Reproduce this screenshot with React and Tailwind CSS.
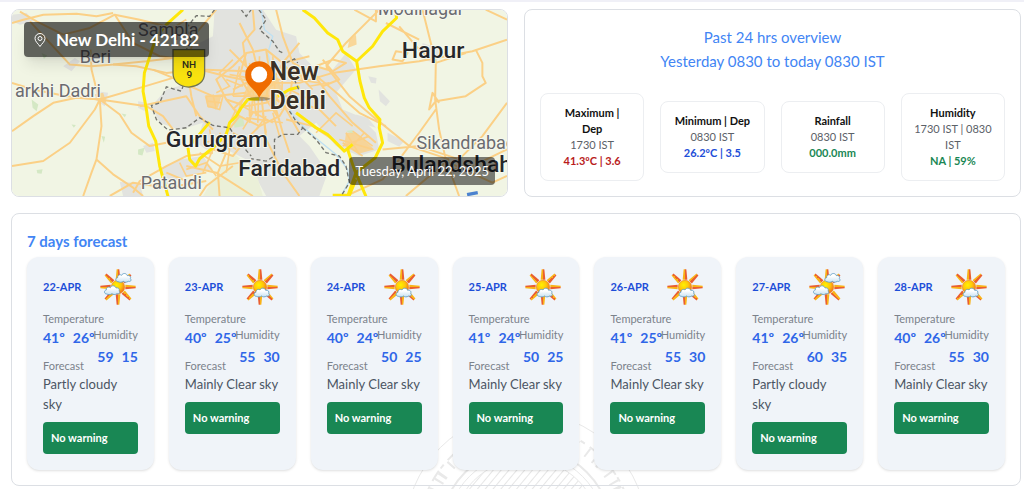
const overview = [
  { title: "Maximum | Dep", time: "1730 IST", value: "41.3ºC | 3.6", color: "text-[#b91c1c]" },
  { title: "Minimum | Dep", time: "0830 IST", value: "26.2ºC | 3.5", color: "text-[#1d4ed8]" },
  { title: "Rainfall", time: "0830 IST", value: "000.0mm", color: "text-[#198754]" },
  { title: "Humidity", time: "1730 IST | 0830 IST", value: "NA | 59%", color: "text-[#198754]" },
];

const forecast = [
  { date: "22-APR", max: 41, min: 26, rhMax: 59, rhMin: 15, sky: "Partly cloudy sky" },
  { date: "23-APR", max: 40, min: 25, rhMax: 55, rhMin: 30, sky: "Mainly Clear sky" },
  { date: "24-APR", max: 40, min: 24, rhMax: 50, rhMin: 25, sky: "Mainly Clear sky" },
  { date: "25-APR", max: 41, min: 24, rhMax: 50, rhMin: 25, sky: "Mainly Clear sky" },
  { date: "26-APR", max: 41, min: 25, rhMax: 55, rhMin: 30, sky: "Mainly Clear sky" },
  { date: "27-APR", max: 41, min: 26, rhMax: 60, rhMin: 35, sky: "Partly cloudy sky" },
  { date: "28-APR", max: 40, min: 26, rhMax: 55, rhMin: 30, sky: "Mainly Clear sky" },
];

const Cloud = ({ x, y }) => (
  <path
    transform={`translate(${x} ${y})`}
    d="M-17 12C-25 12-26 1-18 0C-19-8-10-11-6-7C-3-15 9-14 11-6C18-8 23-2 20 3C25 8 20 13 14 11C8 15 2 14-1 11C-6 15-12 14-17 12Z"
    fill="url(#cloud)"
    stroke="#5d9cc4"
    strokeWidth="2.5"
  />
);

function SkyIcon({ partly }) {
  return (
    <svg viewBox="-8 -6 120 120" className="size-10 shrink-0" aria-hidden="true">
      <defs>
        <radialGradient id="sun" cx="0.4" cy="0.35" r="0.7">
          <stop offset="0" stopColor="#fff200" />
          <stop offset="0.5" stopColor="#ffc60a" />
          <stop offset="1" stopColor="#f0641e" />
        </radialGradient>
        <linearGradient id="ray" x1="0" x2="1">
          <stop offset="0" stopColor="#f6b31b" />
          <stop offset="0.5" stopColor="#fbb216" />
          <stop offset="0.5" stopColor="#ea5f30" />
          <stop offset="1" stopColor="#ea5f30" />
        </linearGradient>
        <linearGradient id="cloud" x1="0" x2="0" y1="0" y2="1">
          <stop offset="0.3" stopColor="#ffffff" />
          <stop offset="1" stopColor="#c8e2f2" />
        </linearGradient>
      </defs>
      {[0, 45, 90, 135, 180, 225, 270, 315].map((a) => (
        <path key={a} d="M45 32L48 1H56L59 32Z" fill="url(#ray)" transform={`rotate(${a} 52 54)`} />
      ))}
      <circle cx="52" cy="54" r="20" fill="url(#sun)" stroke="#f08a1d" strokeWidth="2" />
      {partly ? (
        <>
          <Cloud x={69} y={26} />
          <Cloud x={35} y={63} />
        </>
      ) : (
        <Cloud x={58} y={70} />
      )}
    </svg>
  );
}

function MapView() {
  return (
    <svg
      viewBox="36 30 1488 561"
      preserveAspectRatio="xMidYMid slice"
      className="absolute inset-0 size-full"
      role="img"
      aria-label="Map of New Delhi"
    >
      <rect x="-400" y="-400" width="2400" height="1400" fill="#f1f5e4" />

      {/* urban areas */}
      <g fill="#e2e3df">
        <path d="M645 30L640 110L560 150L590 190L610 240L500 270L455 320L480 370L540 392L610 370L590 430L620 450L680 450L740 480L800 590H960L985 520L930 440L900 410L950 370L1010 440L1080 470L1140 450L1130 400L1080 350L1030 330L1010 280L1070 210L1040 160L1000 210L940 200L900 160L890 110L830 90L790 30Z" />
        <path d="M480 510L540 480L610 470L640 510L560 530L490 560Z" />
        <path d="M36 45L80 40L100 65L60 75L36 65ZM190 200L225 175L240 185L215 215ZM290 275L325 280L315 320L285 300ZM1107 230L1132 235L1130 252L1115 250ZM1138 270L1172 305L1160 320L1142 305ZM1165 400L1215 425L1200 442L1165 425ZM1270 130L1330 150L1310 190L1270 180ZM360 548L420 550L430 590H370ZM1070 345L1105 355L1130 385L1080 370Z" />
        <path d="M430 440L460 430L465 455L440 460ZM240 148L262 155L250 175ZM415 305L440 310L435 335L415 325Z" />
      </g>
      <g fill="#d4e8c4">
        <path d="M95 300L115 315L110 335L98 325ZM415 450L435 445L428 468L415 465ZM365 342L380 345L375 353ZM305 410L316 412L312 430ZM110 512L128 510L125 523L112 522ZM215 375L228 377L222 385ZM125 160L142 168L132 178ZM700 360L730 350L735 380L705 385ZM1040 395L1060 392L1062 405Z" />
      </g>
      <path d="M700 460L770 520L790 590H610L640 540Z" fill="#ebf0d8" />

      {/* river */}
      <path
        d="M785 30L795 90L820 110L805 160L815 200L830 240L850 290L880 345L920 390L960 425L1010 465L1045 510L1050 545L1025 590"
        fill="none"
        stroke="#bfe0f2"
        strokeWidth="4"
      />

      {/* minor roads */}
      <g fill="none" stroke="#fbd086" strokeWidth="6" strokeLinejoin="round">
        <path d="M36 70L70 60L130 45L230 42L290 50L340 40M60 36L110 65L190 105L270 85L345 45L420 60L520 85L560 60M90 65L150 130L210 195L275 200L340 195L440 185L520 175M272 150L275 210L290 270L300 300M36 250L100 270L200 290L300 300L420 265L520 235L600 210L740 215" />
        <path d="M36 395L100 350L160 310L230 295L300 300L285 330L210 430L130 485L36 500M300 300L305 380L290 480L275 520L250 590M290 480L340 525L400 565L430 590M300 300L360 345L395 400L450 440L500 430M300 300L440 320L490 350L520 390M340 195L410 200L500 220L600 210M345 45L400 130L480 170L560 180" />
        <path d="M400 580L420 545L500 500L560 470L640 460M330 590L400 550L500 565L620 545M460 210L520 235L570 260L640 290L740 280M420 320L560 290L600 350L640 390M590 350L575 290L560 190L590 100L650 30M660 590L655 520L680 460M700 500L620 560L600 590M500 520L560 545M560 500L650 520L760 590" />
        <path d="M650 240L700 200L740 160L800 150L850 190L880 230L870 300L840 350L780 380L720 350L680 300ZM690 150L740 200L800 260L860 330L900 400M720 70L760 150L779 230L790 330L800 420L850 520L900 590M600 210L680 230L779 250L900 250L1000 220M830 30L850 110L880 190L940 220L990 290L1060 370L1130 430" />
        <path d="M700 270L740 250L779 280L830 250M680 300L740 320L800 310L860 280M740 160L720 230L760 300L750 370M800 150L810 220L800 300L840 360M850 190L820 240L760 270L700 330M760 30L765 90L730 130L740 200M900 130L850 190L930 170M720 350L680 400L640 450L700 470L740 420L780 380M860 360L940 380L1000 420M870 300L960 330L1010 380M750 340L830 330L850 400L870 460" />
        <path d="M950 200L1000 215L1040 190L1000 180ZM970 180L1020 240L970 260M1000 220L1140 200L1260 185L1420 155L1524 120M980 200L1040 130L1120 50L1140 30M1065 30L1130 65L1130 30M980 200L1050 290L1120 350L1230 440L1350 480M940 220L1000 270L1080 340L1160 380" />
        <path d="M1270 30L1290 110L1310 190L1308 300L1320 390L1340 480L1380 590M1200 80L1260 150L1310 190L1400 160M1430 150L1450 190L1450 230L1460 250L1400 290L1310 305L1290 330L1300 280L1320 310M1310 330L1260 400L1200 480L1150 540L1040 590M1524 310L1450 410L1380 480L1260 440L1150 450M1340 485L1480 550L1524 530M1460 30L1524 60M1160 70L1260 120M1180 180L1190 155L1225 160L1210 185ZM1220 590L1350 480M1524 450L1420 500L1300 520" />
      </g>
      <g fill="none" stroke="#fbd086" strokeWidth="5">
        <path d="M610 430L660 420L710 450M600 460L660 500L720 490M630 390L640 450L610 520M660 400L690 450L680 520M620 290L670 290L660 330L625 320ZM640 285L650 330M625 305L665 310M700 400L750 430M560 510L620 490L650 530M540 490L560 530L620 520" />
        <path d="M730 215L830 225M735 235L850 240M700 290L870 290M720 200L700 290M750 190L770 350M780 170L775 370M820 170L830 340M850 210L845 330M760 340L730 390M790 340L800 400M820 340L840 410M710 310L820 370M740 355L850 370M880 210L940 270M870 270L930 300" />
        <path d="M700 180L660 220L690 260L650 280M710 330L690 370M730 300L710 350M750 310L750 350M800 350L770 390M830 300L870 330M680 240L730 260M690 225L750 235M890 240L960 250M900 220L930 260L990 250" />
        <path d="M1020 420L1120 450M1030 440L1110 410M1040 400L1080 465M1060 395L1120 440M1045 455L1095 400M1030 430L1090 470M950 400L1010 340L1060 380" />
      </g>
      <g fill="#fbd086" opacity="0.8">
        <path d="M750 245L830 225L850 270L810 300L730 290ZM1040 400L1070 400L1125 450L1080 462L1035 440ZM615 290H665L655 325H625ZM285 285L310 280L320 310L295 305ZM1050 120L1070 105L1072 135L1045 145Z" />
      </g>

      {/* expressways */}
      <g fill="none" stroke="#ffe70a" strokeWidth="9" strokeLinejoin="round">
        <path d="M550 30L500 75L470 110L452 165L434 220L430 275L440 330L447 380L468 425L480 500L505 591" />
        <path d="M910 30L945 55L985 100L1015 120L1030 155L1072 185L1082 245L1095 295L1110 325L1142 360L1140 385L1150 430L1128 475L1070 520L1045 591" />
        <path d="M1072 185L1120 140L1150 95L1192 55L1190 40" />
        <path d="M779 298L745 300L725 325L710 350L690 370L680 405L640 445L600 478L588 500L570 480L565 445L595 410L630 368" />
        <path d="M835 290L870 270L900 262M890 340L950 385L985 405L1035 455L1060 435M1045 450L1065 510L1100 591M1070 540L1050 588H1000" />
      </g>

      {/* state borders */}
      <g fill="none" stroke="#73746e" strokeWidth="4" strokeDasharray="12 8">
        <path d="M645 30L630 50L590 48L560 85L575 125L555 160L590 190L560 230L545 275L500 262L480 310L455 318L470 360L505 392L560 385L600 355L640 378L690 385L720 430L755 470" />
        <path d="M725 30L740 50L755 30M778 30L800 60L780 90L820 125L840 155L850 160M860 190L885 178L895 190M885 240L900 275M870 335L890 365L910 385L895 405L850 405L825 420L825 470L800 485L755 478M910 385L950 420L980 460L1020 470L1040 500L1050 550L1025 591" />
      </g>
      <path d="M1404 586L1436 580" stroke="#4b82cf" strokeWidth="10" />

      {/* highway shield */}
      <path d="M520 150H615V220C615 250 590 261 568 263C545 261 520 250 520 220Z" fill="#f9e20f" stroke="#6f7353" strokeWidth="4" />
      <g fill="#2e2c1e" fontFamily="Roboto, sans-serif" fontWeight="500" fontSize="30" textAnchor="middle">
        <text x="568" y="204">NH</text>
        <text x="569" y="235">9</text>
      </g>

      {/* place names */}
      <g
        fontFamily="Roboto, sans-serif"
        fontSize="54"
        fill="#6b6b70"
        stroke="#f6f8ee"
        strokeWidth="6"
        paintOrder="stroke"
        strokeLinejoin="round"
      >
        <text x="415" y="110">Sampla</text>
        <text x="240" y="189">Beri</text>
        <text x="303" y="293" textAnchor="end">arkhi Dadri</text>
        <text x="423" y="569">Pataudi</text>
        <text x="1136" y="46">Modinagar</text>
        <text x="1252" y="450">Sikandrabad</text>
        <g fontSize="69" fontWeight="500" fill="#25262a">
          <text x="498" y="443">Gurugram</text>
          <text x="716" y="530">Faridabad</text>
          <text x="1208" y="174">Hapur</text>
          <text x="1176" y="519">Bulandshahr</text>
        </g>
        <g fontSize="75" fontWeight="600" fill="#3a3026">
          <text x="810" y="242">New</text>
          <text x="810" y="329">Delhi</text>
        </g>
      </g>

      <ellipse cx="779" cy="298" rx="34" ry="6" fill="#000" opacity="0.3" />
      <path d="M779 295C767 266 737 258 737 226A42 41 0 0 1 821 226C821 258 791 266 779 295Z" fill="#ef6c00" />
      <circle cx="779" cy="225" r="24" fill="#fff" />
    </svg>
  );
}

function PinIcon() {
  return (
    <svg viewBox="0 0 12 16" className="h-4 w-3" fill="none" stroke="currentColor" aria-hidden="true">
      <path d="M6 14.5C4.500 12 1 9.500 1 6.500A5 5 0 0 1 11 6.500C11 9.500 7.500 12 6 14.500Z" />
      <circle cx="6" cy="6.500" r="2" />
    </svg>
  );
}

function Emblem() {
  return (
    <div className="pointer-events-none absolute inset-x-0 top-[411px] flex justify-center pl-7" aria-hidden="true">
      <svg viewBox="-122 -122 244 244" className="size-[244px]" fill="none" stroke="#e9e9e9">
        <defs>
          <pattern id="hatch" width="6" height="6" patternUnits="userSpaceOnUse" patternTransform="rotate(40)">
            <path d="M0 0V6" stroke="#e6e6e6" strokeWidth="2" />
          </pattern>
        </defs>
        <circle r="121" />
        <circle r="107" strokeWidth="2" strokeDasharray="12 3 5 6" />
        <circle r="101" strokeWidth="10" strokeDasharray="2 8 2 4 3 11" />
        <circle r="86" strokeWidth="2" />
        <circle r="80" />
        <circle r="74" fill="url(#hatch)" />
      </svg>
    </div>
  );
}

function DayCard({ day }) {
  return (
    <article className="rounded-xl bg-[#f0f4f9] px-4 pt-[10px] pb-4 shadow-sm">
      <div className="flex items-center justify-between">
        <h3 className="text-[11px] leading-4 font-bold text-[#1d4ed8]">{day.date}</h3>
        <SkyIcon partly={day.sky.startsWith("Partly")} />
      </div>

      <div className="mt-1 flex justify-between whitespace-nowrap">
        <div className="w-0">
          <p className="text-[11px] leading-4 text-[#7b828b]">Temperature</p>
          <p className="flex gap-2 pt-px text-sm leading-5 font-bold text-[#2f66e8]">
            <span>{day.max}º</span>
            <span>{day.min}º</span>
          </p>
          <p className="mt-[10px] text-[11px] leading-4 text-[#7b828b]">Forecast</p>
        </div>
        <div className="pt-4">
          <p className="text-[11px] leading-4 text-[#7b828b]">Humidity</p>
          <p className="mt-1 flex justify-end gap-2 text-sm leading-5 font-bold text-[#2f66e8]">
            <span>{day.rhMax}</span>
            <span>{day.rhMin}</span>
          </p>
        </div>
      </div>

      <p className="text-[13px] leading-5 text-[#4b5563]">{day.sky}</p>
      <button
        type="button"
        className="mt-2 block w-full rounded bg-[#198754] px-2 py-2 text-left text-[11px] leading-4 font-bold text-white"
      >
        No warning
      </button>
    </article>
  );
}

export default function App() {
  return (
    <div className="relative min-h-screen overflow-hidden bg-white pb-[3px] font-['Lato','Open_Sans',sans-serif]">
      <Emblem />
      <div className="h-[2px] bg-[#f0f0f7]" />

      <main className="relative flex flex-col gap-4 pt-[7px] pr-[3px] pl-[11px]">
        <div className="grid grid-cols-2 gap-4">
          {/* Location map */}
          <section className="relative min-h-[188px] overflow-hidden rounded-lg border border-[#dcdfe4]">
            <MapView />
            <div className="absolute top-3 left-3 flex items-center gap-[10px] rounded bg-black/60 px-[10px] py-[5px] text-white shadow-lg">
              <PinIcon />
              <h1 className="text-[17px] leading-[25px] font-bold">New Delhi - 42182</h1>
            </div>
            <p className="absolute right-3 bottom-[11px] rounded bg-black/50 px-[6px] py-1 text-[13px] leading-5 text-white">
              Tuesday, April 22, 2025
            </p>
          </section>

          {/* Last 24 hours */}
          <section className="rounded-lg border border-[#dcdfe4] bg-white px-[15px] pt-[15px] pb-[15px]">
            <h2 className="text-center text-[15px] leading-6 text-[#4285f4]">
              Past 24 hrs overview
              <br />
              Yesterday 0830 to today 0830 IST
            </h2>
            <div className="mt-5 grid grid-cols-4 items-center gap-4">
              {overview.map((o) => (
                <div key={o.title} className="rounded-lg border border-[#eceef1] px-3 py-[11px] text-center text-[11px] leading-4">
                  <h3 className="px-px font-bold text-[#111]">{o.title}</h3>
                  <p className="text-[#5b6168]">{o.time}</p>
                  <p className={`font-bold ${o.color}`}>{o.value}</p>
                </div>
              ))}
            </div>
          </section>
        </div>

        <section className="rounded-lg border border-[#dcdfe4] p-[15px]">
          <h2 className="text-[15px] leading-6 font-bold text-[#4285f4]">7 days forecast</h2>
          <div className="mt-1 grid grid-cols-7 gap-[15px]">
            {forecast.map((day) => (
              <DayCard key={day.date} day={day} />
            ))}
          </div>
        </section>
      </main>
    </div>
  );
}
